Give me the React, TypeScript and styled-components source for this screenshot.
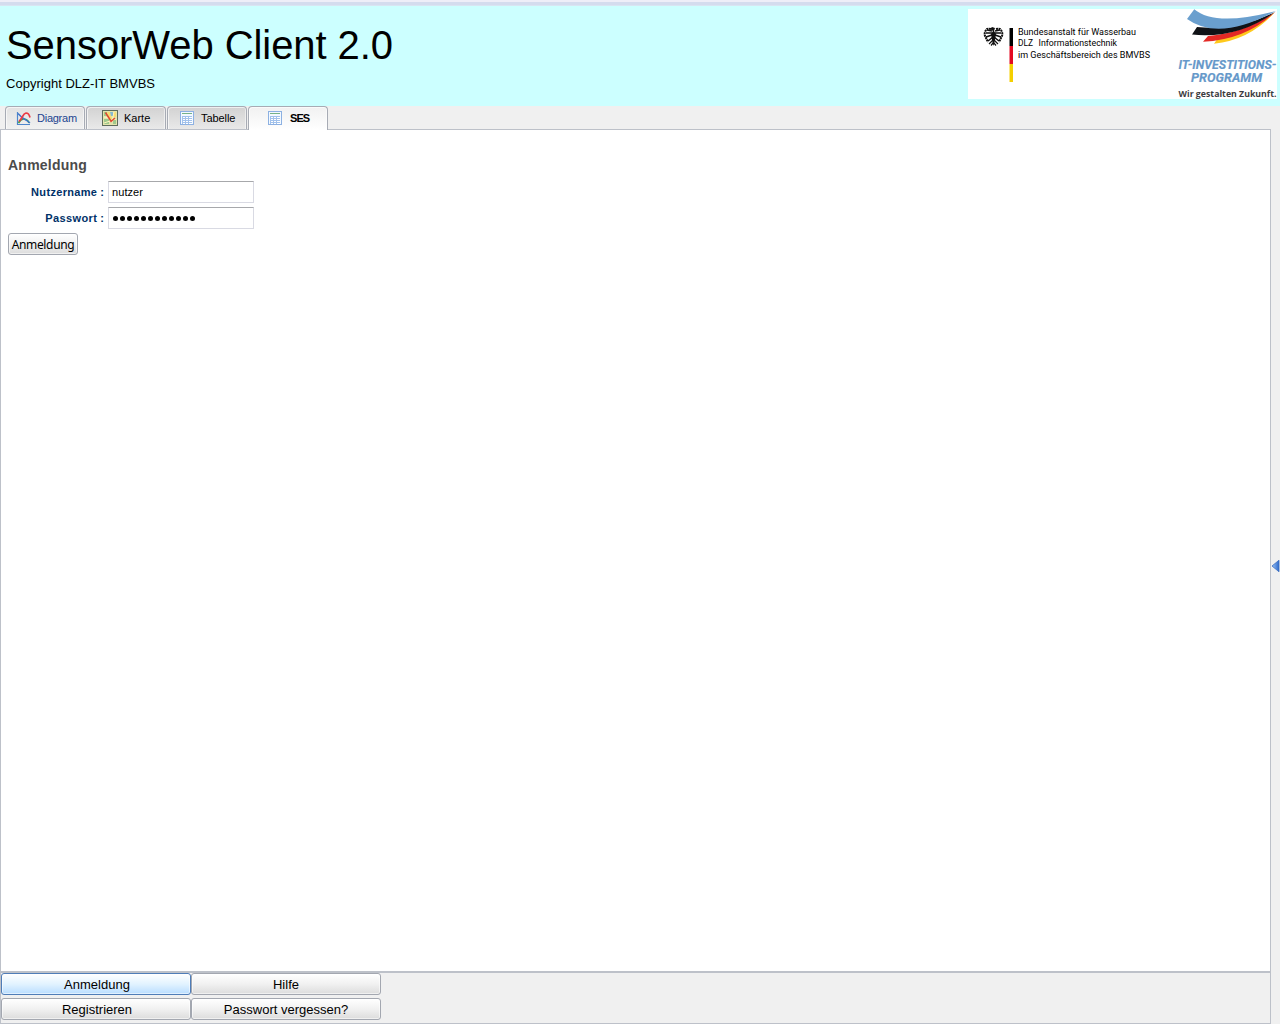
import React from 'react';
import styled, { createGlobalStyle, css } from 'styled-components';

const GlobalStyle = createGlobalStyle`
  * { box-sizing: border-box; }
  body { margin: 0; background: #f0f0f0; overflow: hidden; }
  body, button, input { font-family: "Liberation Sans", Arial, sans-serif; color: #000; }
`;

const Page = styled.div`
  width: 1280px;
  height: 1024px;
  display: flex;
  flex-direction: column;
  background: #f0f0f0;
`;

const TopStrip = styled.div`
  flex: none;
  height: 6px;
  background: linear-gradient(#eeeef8 0 2px, #d4dcee 2px 5px, #d9e5f2 5px);
`;

const Header = styled.header`
  flex: none;
  height: 100px;
  display: flex;
  justify-content: space-between;
  padding: 3px 3px 0 6px;
  background: #ccffff;
`;

const Title = styled.h1`
  margin: 13px 0 0;
  font-size: 40px;
  line-height: 46px;
  font-weight: 400;
  letter-spacing: -0.07px;
  white-space: nowrap;
`;

const Copyright = styled.p`
  margin: 8px 0 0;
  font-size: 13px;
  line-height: 15px;
  letter-spacing: 0.02px;
`;

const Logos = styled.div`
  width: 309px;
  height: 90px;
  background: #fff;
  svg { display: block; overflow: visible; }
`;

const Body = styled.div`
  flex: 1;
  min-height: 0;
  display: flex;
`;

const Main = styled.main`
  width: 1271px;
  display: flex;
  flex-direction: column;
`;

const Splitter = styled.aside`
  width: 9px;
  display: flex;
  align-items: center;
  justify-content: flex-end;
  padding-top: 2px;
`;

const TabBar = styled.nav`
  height: 24px;
  display: flex;
  gap: 1px;
  padding-left: 5px;
  flex: none;
`;

const Tab = styled.div<{ $tone: 'hover' | 'idle' | 'active'; $start: number }>`
  width: 80px;
  height: 23px;
  display: flex;
  align-items: center;
  gap: 6px;
  padding-left: ${p => p.$start}px;
  border: 1px solid #a7abb4;
  border-bottom: 0;
  border-radius: 4px 4px 0 0;
  box-shadow: inset 1px 1px 0 rgba(255, 255, 255, 0.65), inset -1px 0 0 rgba(255, 255, 255, 0.5);
  font-size: 11px;
  line-height: 13px;
  ${p => p.$tone === 'hover' && css`
    background: linear-gradient(#e2e2e2, #f1f1f1);
    color: #1d4590;
  `}
  ${p => p.$tone === 'idle' && css`
    background: linear-gradient(#d2d2d2, #e9e9e9);
  `}
  ${p => p.$tone === 'active' && css`
    position: relative;
    height: 24px;
    padding-bottom: 1px;
    background: linear-gradient(#f1f1f1, #fff);
    font-weight: 700;
  `}
  svg { flex: none; }
`;

const TabLabel = styled.span<{ $spacing?: number; $indent?: number }>`
  letter-spacing: ${p => p.$spacing ?? 0}px;
  padding-left: ${p => p.$indent ?? 0}px;
`;

const Panel = styled.section`
  flex: 1;
  margin-top: -1px;
  padding: 27px 0 0 7px;
  border: 1px solid #bdc1c9;
  border-bottom-width: 2px;
  background: #fff;
`;

const Heading = styled.h2`
  margin: 0 0 7px;
  font: 700 14px/17px "Liberation Sans", Arial, sans-serif;
  letter-spacing: 0.24px;
  color: #4b4b4b;
`;

const Field = styled.label`
  display: flex;
  align-items: center;
  height: 22px;
  margin-bottom: 4px;
`;

const FieldName = styled.span`
  width: 96px;
  margin-right: 4px;
  text-align: right;
  white-space: nowrap;
  font-size: 11px;
  font-weight: 700;
  color: #003168;
`;

const FieldText = styled.span<{ $spacing: number }>`
  letter-spacing: ${p => p.$spacing}px;
`;

const Input = styled.input`
  width: 146px;
  height: 22px;
  padding: 0 3px;
  border: 1px solid #d9dae3;
  border-top-color: #a7a8ab;
  border-radius: 0;
  outline: 0;
  font-size: 11px;
  letter-spacing: 0.08px;
`;

const PasswordBox = styled.div`
  width: 146px;
  height: 22px;
  display: flex;
  align-items: center;
  gap: 2px;
  padding: 1px 0 0 4px;
  border: 1px solid #d9dae3;
  border-top-color: #a7a8ab;
`;

const Dot = styled.i`
  width: 5px;
  height: 5px;
  border-radius: 50%;
  background: #000;
`;

const Button = styled.button<{ $focused?: boolean }>`
  height: 22px;
  padding: 2px 0 0;
  border: 1px solid ${p => (p.$focused ? '#4f7db8' : '#a3a7b0')};
  border-radius: 3px;
  background: ${p => p.$focused
    ? 'linear-gradient(#fff, #e2f3ff 50%, #b9ddff)'
    : 'linear-gradient(#fff, #f1f1f1 50%, #dcdcdc)'};
  box-shadow: inset 0 0 0 1px rgba(255, 255, 255, 0.55);
  font-size: 13px;
  line-height: 18px;
  white-space: nowrap;
`;

const ButtonLabel = styled.span<{ $nudge?: number }>`
  padding-left: ${p => p.$nudge ?? 0}px;
`;

const LoginButton = styled(Button)`
  display: block;
  width: 70px;
  font-family: "Noto Sans", "Open Sans", sans-serif;
  font-size: 12px;
  letter-spacing: -0.35px;
`;

const Footer = styled.footer`
  height: 51px;
  flex: none;
  display: grid;
  grid-template-columns: 190px 190px;
  grid-template-rows: 22px 22px;
  row-gap: 3px;
  border: solid #bdc1c9;
  border-width: 0 1px 1px;
`;

const DiagramIcon = () => (
  <svg width="15" height="15" viewBox="0 0 15 15" fill="none">
    <path d="M1.500 1v12.500H14" stroke="#4f86cc" strokeWidth="1.2" />
    <path d="M2.500 12q2.500-4.500 5.500-4 4 .5 5 4" stroke="#3fa24d" strokeWidth="1.700" />
    <path d="M2 2.500l4 4 4 2.500 4 3" stroke="#3d72cc" strokeWidth="1.5" />
    <path d="M3 10.500q2-2 3.500-5T10 2q3 0 4 4.500" stroke="#ea3c46" strokeWidth="1.700" />
  </svg>
);

const MapIcon = () => (
  <svg width="16" height="16" viewBox="0 0 16 16">
    <path fill="#5d6b5c" d="M0 0h16v16H0z" />
    <path fill="#e3e4ad" d="M1 1h14v14H1z" />
    <path fill="#9fc98c" d="M2 2h3v4H2zM2 9h5v5H2zM11 10h3v4h-3z" />
    <path fill="#f6dc72" d="M5 2h3l2 7-3 1zM12 2h2v5h-3z" />
    <path fill="#86b9cf" d="M8 2h3v4H9z" />
    <path d="M12 2l-2 10M2 13l12-4M2 7l5 1" stroke="#fff3bd" />
    <path d="M3.500 2.500l6 9.500M9 11.500l4-3.500" stroke="#e0492f" strokeWidth="1.500" />
  </svg>
);

const TableIcon = () => (
  <svg width="14" height="14" viewBox="0 0 14 14" shapeRendering="crispEdges">
    <path fill="#8db1e2" d="M0 0h14v14H0z" />
    <path fill="#f3f9ff" d="M1 1h12v12H1z" />
    <path fill="#76b287" d="M2 2h10v1H2z" />
    <path fill="#a2c2ec" d="M2 5h10v8H2z" />
    <path fill="#fff" d="M3 6h2v1H3zM6 6h2v1H6zM9 6h3v1H9zM3 8h2v1H3zM6 8h2v1H6zM9 8h3v1H9zM3 10h2v1H3zM6 10h2v1H6zM9 10h3v1H9zM3 12h2v1H3zM6 12h2v1H6zM9 12h3v1H9z" />
  </svg>
);

const Collapse = () => (
  <svg width="9" height="13" viewBox="0 0 9 13">
    <defs>
      <linearGradient id="arrow" x1="0" x2="1">
        <stop offset="0" stopColor="#9bc4f5" />
        <stop offset="1" stopColor="#2c68cb" />
      </linearGradient>
    </defs>
    <path d="M1 6 8 .2v11.600z" fill="url(#arrow)" stroke="#3d6fc0" strokeWidth=".8" />
  </svg>
);

const LogoArt = () => (
  <svg width="309" height="90" viewBox="0 0 309 90">
    <g fill="none" stroke="#111">
      <path d="M23 20q-4-1-5 1-2 3-1 6l3 6M28 20q4-1 5 1 2 3 1 6l-3 6" strokeWidth="2" strokeDasharray="2 .6" />
      <path d="M24 22l-5-1m5 3-6 0m6 2-6 2m7 0-5 4M27 22l5-1m-5 3 6 0m-6 2 6 2m-7 0 5 4" strokeWidth="1.6" />
      <path d="M25 31l-4 4m5-4 4 4M23 36.500l2.500-3 2.500 3" strokeWidth="1.2" />
    </g>
    <path d="M24 18l3 1-1 3 2 3-1 6-1.500 6-1.500-6-1-6 2-3-3-2z" fill="#111" />
    <path d="M41.500 19h3.500v18h-3.500z" fill="#000" />
    <path d="M41.500 37h3.500v18h-3.500z" fill="#e30921" />
    <path d="M41.500 55h3.500v18h-3.500z" fill="#f4cf00" />
    <g fontFamily="Roboto, Arial, sans-serif" fontSize="9.500" fill="#000">
      <text x="50" y="26" textLength="118" lengthAdjust="spacingAndGlyphs">Bundesanstalt für Wasserbau</text>
      <text x="50" y="37" textLength="15" lengthAdjust="spacingAndGlyphs">DLZ</text>
      <text x="70.500" y="37" textLength="78.500" lengthAdjust="spacingAndGlyphs">Informationstechnik</text>
      <text x="50" y="48.500" textLength="132" lengthAdjust="spacingAndGlyphs">im Geschäftsbereich des BMVBS</text>
    </g>
    <path d="M249 30.500Q280 25 307 3Q282 31 246 34.700z" fill="#ffc91c" />
    <path d="M240 27Q276 24 307 3Q278 31 235 32.700z" fill="#e42925" />
    <path d="M229 18Q270 22 307 3Q270 30 224 25.500z" fill="#101216" />
    <path d="M226.300 0.300Q247 18 308 2Q251 33 219 10z" fill="#6a9fce" />
    <g fontFamily="Roboto, Arial, sans-serif" fontWeight="700" fontStyle="italic" fontSize="12.800" fill="#6699ca" stroke="#6699ca" strokeWidth=".15">
      <text x="210.500" y="60" textLength="98" lengthAdjust="spacingAndGlyphs">IT-INVESTITIONS-</text>
      <text x="223" y="73" textLength="71" lengthAdjust="spacingAndGlyphs">PROGRAMM</text>
    </g>
    <text x="210.500" y="88" textLength="98" lengthAdjust="spacingAndGlyphs" fontFamily="Open Sans, sans-serif" fontWeight="700" fontSize="9.500" fill="#3d3d3f">Wir gestalten Zukunft.</text>
  </svg>
);

export default function App() {
  return (
    <Page>
      <GlobalStyle />
      <TopStrip />
      <Header>
        <div>
          <Title>SensorWeb Client 2.0</Title>
          <Copyright>Copyright DLZ-IT BMVBS</Copyright>
        </div>
        <Logos><LogoArt /></Logos>
      </Header>
      <Body>
        <Main>
          <TabBar>
            <Tab $tone="hover" $start={10}><DiagramIcon /><TabLabel $spacing={-0.25}>Diagram</TabLabel></Tab>
            <Tab $tone="idle" $start={15}><MapIcon /><TabLabel>Karte</TabLabel></Tab>
            <Tab $tone="idle" $start={12}><TableIcon /><TabLabel $spacing={-0.08} $indent={1}>Tabelle</TabLabel></Tab>
            <Tab $tone="active" $start={19}><TableIcon /><TabLabel $spacing={-0.9} $indent={2}>SES</TabLabel></Tab>
          </TabBar>
          <Panel>
            <Heading>Anmeldung</Heading>
            <Field>
              <FieldName><FieldText $spacing={0.32}>Nutzername</FieldText> :</FieldName>
              <Input defaultValue="nutzer" />
            </Field>
            <Field>
              <FieldName><FieldText $spacing={0.4}>Passwort</FieldText> :</FieldName>
              <PasswordBox>{Array.from({ length: 12 }, (_, i) => <Dot key={i} />)}</PasswordBox>
            </Field>
            <LoginButton>Anmeldung</LoginButton>
          </Panel>
          <Footer>
            <Button $focused><ButtonLabel $nudge={2}>Anmeldung</ButtonLabel></Button>
            <Button><ButtonLabel>Hilfe</ButtonLabel></Button>
            <Button><ButtonLabel $nudge={2}>Registrieren</ButtonLabel></Button>
            <Button><ButtonLabel>Passwort vergessen?</ButtonLabel></Button>
          </Footer>
        </Main>
        <Splitter><Collapse /></Splitter>
      </Body>
    </Page>
  );
}
